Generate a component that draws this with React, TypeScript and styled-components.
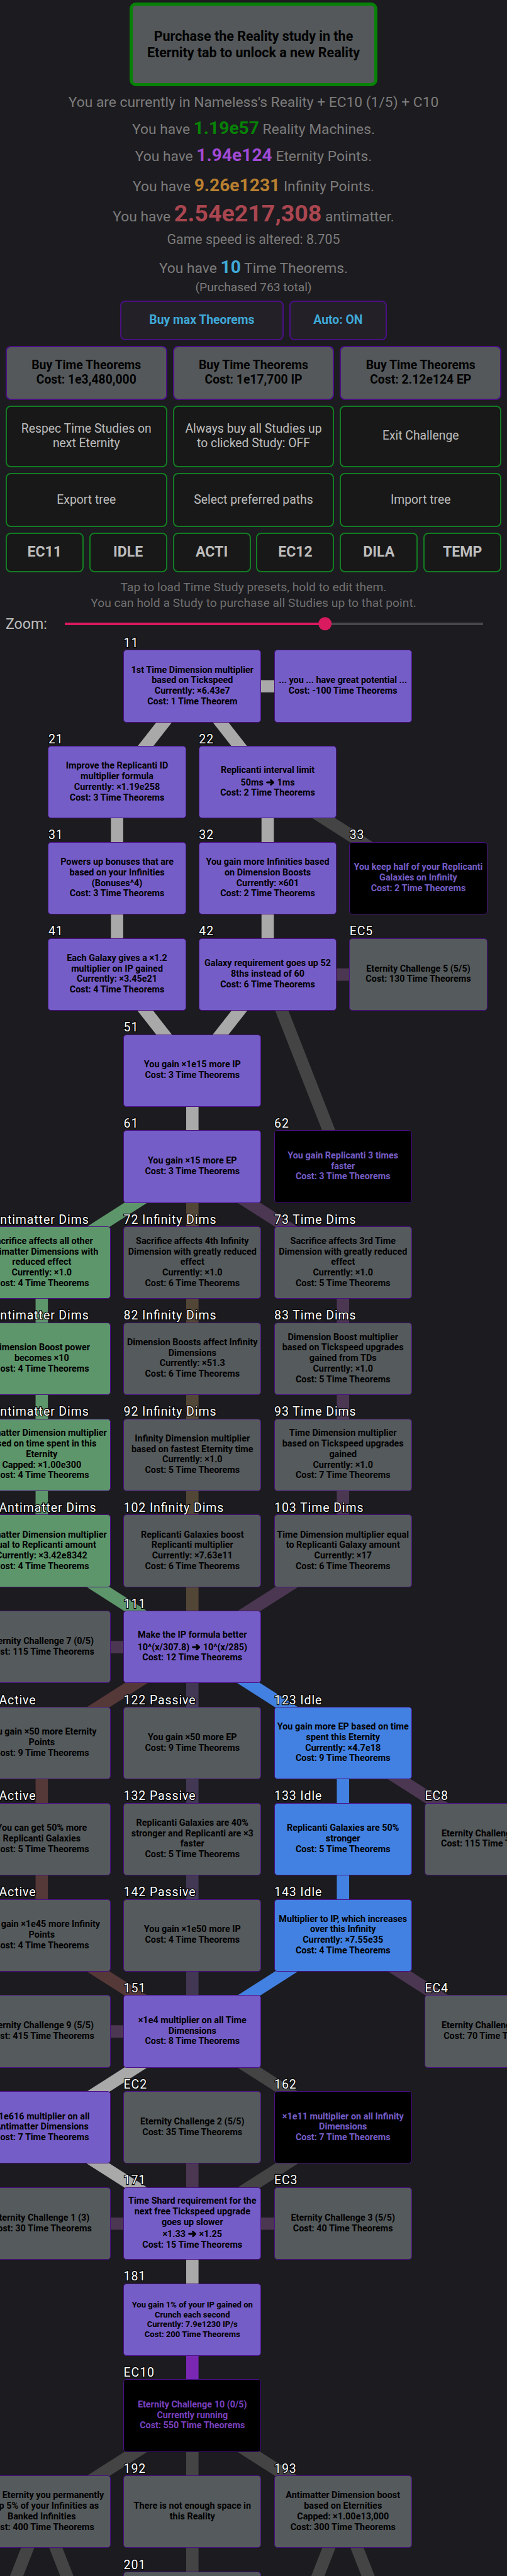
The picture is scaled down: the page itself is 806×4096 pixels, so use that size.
import React from "react";
import styled, { createGlobalStyle } from "styled-components";

const GlobalStyle = createGlobalStyle`
  html, body { margin: 0; padding: 0; background: #1c1b1f; }
  body { font-family: Roboto, "Liberation Sans", sans-serif; }
  *, *::before, *::after { box-sizing: border-box; }
`;

const Screen = styled.main`
  display: flex;
  flex-direction: column;
  width: 806px;
  height: 4096px;
  overflow: hidden;
  background: #1c1b1f;
`;

const RealityButton = styled.button`
  align-self: center;
  flex: none;
  width: 394px;
  height: 133px;
  margin: 4.2px 0 4.8px;
  padding: 0;
  border: 5.2px solid #078207;
  border-radius: 10px;
  background: #54585a;
  color: #000;
  font: 700 21.47px/25.2px Roboto, sans-serif;
  white-space: nowrap;
`;

const StatLine = styled.p<{ $h: number; $size?: number; $top?: number }>`
  flex: none;
  margin: ${(p) => p.$top ?? 0}px 0 0;
  height: ${(p) => p.$h}px;
  line-height: ${(p) => p.$h}px;
  font-size: ${(p) => p.$size ?? 22.8}px;
  text-align: center;
  white-space: nowrap;
  color: #7c7c7c;
`;

const Amount = styled.b<{ $color: string; $size?: number }>`
  font-size: ${(p) => p.$size ?? 28.2}px;
  line-height: 0;
  color: ${(p) => p.$color};
`;

const ButtonRow = styled.div<{ $h: number; $top?: number }>`
  display: flex;
  flex: none;
  justify-content: center;
  gap: 8.8px;
  height: ${(p) => p.$h}px;
  margin-top: ${(p) => p.$top ?? 9}px;
  padding: 0 8.8px;
`;

const GameButton = styled.button<{ $kind: "theorem" | "locked" | "plain" | "preset"; $w?: number }>`
  flex: ${(p) => (p.$w ? `0 0 ${p.$w}px` : "1 1 0")};
  min-width: 0;
  padding: 0;
  border: 2px solid ${(p) => (p.$kind === "theorem" || p.$kind === "locked" ? "#4a1085" : "#127d22")};
  border-radius: 8px;
  background: ${(p) => (p.$kind === "theorem" ? "#242027" : p.$kind === "locked" ? "#54585a" : "#181818")};
  color: ${(p) => (p.$kind === "theorem" ? "#3fa9d8" : p.$kind === "locked" ? "#000" : "#bdbdbd")};
  font-family: Roboto, sans-serif;
  font-weight: ${(p) => (p.$kind === "plain" ? 400 : 700)};
  font-size: ${(p) => (p.$kind === "preset" ? 23.1 : 19.35)}px;
  line-height: 22.7px;
  white-space: nowrap;
`;

const Hint = styled.p`
  flex: none;
  margin: 10.7px 0 0;
  height: 51px;
  font-size: 19.25px;
  line-height: 25.5px;
  text-align: center;
  color: #707070;
`;

const ZoomRow = styled.div`
  display: flex;
  flex: none;
  align-items: center;
  height: 40px;
  padding: 0 38px 0 9px;
  color: #bdbdbd;
  font-size: 23.1px;
`;

const ZoomLabel = styled.span`
  width: 94.3px;
  padding-top: 1.5px;
`;

const Track = styled.div`
  position: relative;
  flex: 1;
  height: 3.6px;
  background: #48474b;
`;

const TrackFill = styled.div`
  width: 62.2%;
  height: 100%;
  background: #da1a5f;
`;

const Thumb = styled.div`
  position: absolute;
  left: 62.2%;
  top: 50%;
  width: 21.6px;
  height: 21.6px;
  border-radius: 50%;
  background: #da1a5f;
  transform: translate(-50%, -50%);
`;

const Tree = styled.section`
  position: relative;
  flex: 1;
  overflow: hidden;
`;

const Links = styled.svg`
  position: absolute;
  inset: 0;
  width: 806px;
  height: 3084px;
`;

const COL0 = 305.8;
const COL = 239.45;
const ROW0 = 79.25;
const ROW = 152.78;
const cx = (c: number) => COL0 + c * COL;
const cy = (r: number) => ROW0 + r * ROW;

type Kind = "bought" | "gray" | "open" | "running" | "antimatter" | "idle";

const FILL: Record<Kind, string> = {
  bought: "#755dc7",
  gray: "#555a5c",
  open: "#000000",
  running: "#000000",
  antimatter: "#5e966b",
  idle: "#4281e1",
};

const INK: Record<Kind, string> = {
  bought: "#000",
  gray: "#000",
  open: "#755dc7",
  running: "#7840bf",
  antimatter: "#000",
  idle: "#000",
};

const Study = styled.div<{ $c: number; $r: number; $kind: Kind; $small?: boolean }>`
  position: absolute;
  left: ${(p) => cx(p.$c) - 109.6}px;
  top: ${(p) => cy(p.$r) - 57.6}px;
  width: 219.2px;
  height: 115.2px;
  display: flex;
  flex-direction: column;
  align-items: center;
  justify-content: center;
  border: 1.4px solid #4a1085;
  border-radius: 5px;
  background: ${(p) => FILL[p.$kind]};
  color: ${(p) => INK[p.$kind]};
  font-weight: 700;
  font-size: ${(p) => (p.$small ? 13.08 : 14.4)}px;
  line-height: ${(p) => (p.$small ? 15.4 : 16.75)}px;
  white-space: nowrap;
`;

const StudyLine = styled.span<{ $arrow?: boolean }>`
  padding-top: ${(p) => (p.$arrow ? 2.5 : 0)}px;
`;

const Arrow = styled.svg`
  width: 13.2px;
  height: 10.2px;
  margin: 0 0.6px;
  vertical-align: -0.4px;
  fill: none;
  stroke: currentColor;
  stroke-width: 3;
  stroke-linecap: round;
  stroke-linejoin: round;
`;

const StudyLabel = styled.span<{ $c: number; $r: number }>`
  position: absolute;
  left: ${(p) => cx(p.$c) - 109.2}px;
  top: ${(p) => cy(p.$r) - 57.6 - 22.5}px;
  font-size: 19.5px;
  letter-spacing: 0.9px;
  font-feature-settings: "liga" 1;
  line-height: 24px;
  color: #fff;
  white-space: nowrap;
  -webkit-text-stroke: 2.4px #000;
  paint-order: stroke fill;
`;

interface StudyData {
  c: number;
  r: number;
  kind: Kind;
  label?: string;
  text: string;
  small?: boolean;
}

const studies: StudyData[] = [
  { c: 0, r: 0, kind: "bought", label: "11", text: "1st Time Dimension multiplier|based on Tickspeed|Currently: ×6.43e7|Cost: 1 Time Theorem" },
  { c: 1, r: 0, kind: "bought", text: "... you ... have great potential ...|Cost: -100 Time Theorems" },
  { c: -0.5, r: 1, kind: "bought", label: "21", text: "Improve the Replicanti ID|multiplier formula|Currently: ×1.19e258|Cost: 3 Time Theorems" },
  { c: 0.5, r: 1, kind: "bought", label: "22", text: "Replicanti interval limit|50ms ➜ 1ms|Cost: 2 Time Theorems" },
  { c: -0.5, r: 2, kind: "bought", label: "31", text: "Powers up bonuses that are|based on your Infinities|(Bonuses^4)|Cost: 3 Time Theorems" },
  { c: 0.5, r: 2, kind: "bought", label: "32", text: "You gain more Infinities based|on Dimension Boosts|Currently: ×601|Cost: 2 Time Theorems" },
  { c: 1.5, r: 2, kind: "open", label: "33", text: "You keep half of your Replicanti|Galaxies on Infinity|Cost: 2 Time Theorems" },
  { c: -0.5, r: 3, kind: "bought", label: "41", text: "Each Galaxy gives a ×1.2|multiplier on IP gained|Currently: ×3.45e21|Cost: 4 Time Theorems" },
  { c: 0.5, r: 3, kind: "bought", label: "42", text: "Galaxy requirement goes up 52|8ths instead of 60|Cost: 6 Time Theorems" },
  { c: 1.5, r: 3, kind: "gray", label: "EC5", text: "Eternity Challenge 5 (5/5)|Cost: 130 Time Theorems" },
  { c: 0, r: 4, kind: "bought", label: "51", text: "You gain ×1e15 more IP|Cost: 3 Time Theorems" },
  { c: 0, r: 5, kind: "bought", label: "61", text: "You gain ×15 more EP|Cost: 3 Time Theorems" },
  { c: 1, r: 5, kind: "open", label: "62", text: "You gain Replicanti 3 times|faster|Cost: 3 Time Theorems" },
  { c: -1, r: 6, kind: "antimatter", label: "71 Antimatter Dims", text: "Sacrifice affects all other|Antimatter Dimensions with|reduced effect|Currently: ×1.0|Cost: 4 Time Theorems" },
  { c: 0, r: 6, kind: "gray", label: "72 Infinity Dims", text: "Sacrifice affects 4th Infinity|Dimension with greatly reduced|effect|Currently: ×1.0|Cost: 6 Time Theorems" },
  { c: 1, r: 6, kind: "gray", label: "73 Time Dims", text: "Sacrifice affects 3rd Time|Dimension with greatly reduced|effect|Currently: ×1.0|Cost: 5 Time Theorems" },
  { c: -1, r: 7, kind: "antimatter", label: "81 Antimatter Dims", text: "Dimension Boost power|becomes ×10|Cost: 4 Time Theorems" },
  { c: 0, r: 7, kind: "gray", label: "82 Infinity Dims", text: "Dimension Boosts affect Infinity|Dimensions|Currently: ×51.3|Cost: 6 Time Theorems" },
  { c: 1, r: 7, kind: "gray", label: "83 Time Dims", text: "Dimension Boost multiplier|based on Tickspeed upgrades|gained from TDs|Currently: ×1.0|Cost: 5 Time Theorems" },
  { c: -1, r: 8, kind: "antimatter", label: "91 Antimatter Dims", text: "Antimatter Dimension multiplier|based on time spent in this|Eternity|Capped: ×1.00e300|Cost: 4 Time Theorems" },
  { c: 0, r: 8, kind: "gray", label: "92 Infinity Dims", text: "Infinity Dimension multiplier|based on fastest Eternity time|Currently: ×1.0|Cost: 5 Time Theorems" },
  { c: 1, r: 8, kind: "gray", label: "93 Time Dims", text: "Time Dimension multiplier|based on Tickspeed upgrades|gained|Currently: ×1.0|Cost: 7 Time Theorems" },
  { c: -1, r: 9, kind: "antimatter", label: "101 Antimatter Dims", text: "Antimatter Dimension multiplier|equal to Replicanti amount|Currently: ×3.42e8342|Cost: 4 Time Theorems" },
  { c: 0, r: 9, kind: "gray", label: "102 Infinity Dims", text: "Replicanti Galaxies boost|Replicanti multiplier|Currently: ×7.63e11|Cost: 6 Time Theorems" },
  { c: 1, r: 9, kind: "gray", label: "103 Time Dims", text: "Time Dimension multiplier equal|to Replicanti Galaxy amount|Currently: ×17|Cost: 6 Time Theorems" },
  { c: -1, r: 10, kind: "gray", label: "EC7", text: "Eternity Challenge 7 (0/5)|Cost: 115 Time Theorems" },
  { c: 0, r: 10, kind: "bought", label: "111", text: "Make the IP formula better|10^(x/307.8) ➜ 10^(x/285)|Cost: 12 Time Theorems" },
  { c: -1, r: 11, kind: "gray", label: "121 Active", text: "You gain ×50 more Eternity|Points|Cost: 9 Time Theorems" },
  { c: 0, r: 11, kind: "gray", label: "122 Passive", text: "You gain ×50 more EP|Cost: 9 Time Theorems" },
  { c: 1, r: 11, kind: "idle", label: "123 Idle", text: "You gain more EP based on time|spent this Eternity|Currently: ×4.7e18|Cost: 9 Time Theorems" },
  { c: -1, r: 12, kind: "gray", label: "131 Active", text: "You can get 50% more|Replicanti Galaxies|Cost: 5 Time Theorems" },
  { c: 0, r: 12, kind: "gray", label: "132 Passive", text: "Replicanti Galaxies are 40%|stronger and Replicanti are ×3|faster|Cost: 5 Time Theorems" },
  { c: 1, r: 12, kind: "idle", label: "133 Idle", text: "Replicanti Galaxies are 50%|stronger|Cost: 5 Time Theorems" },
  { c: 2, r: 12, kind: "gray", label: "EC8", text: "Eternity Challenge 8 (5/5)|Cost: 115 Time Theorems" },
  { c: -1, r: 13, kind: "gray", label: "141 Active", text: "You gain ×1e45 more Infinity|Points|Cost: 4 Time Theorems" },
  { c: 0, r: 13, kind: "gray", label: "142 Passive", text: "You gain ×1e50 more IP|Cost: 4 Time Theorems" },
  { c: 1, r: 13, kind: "idle", label: "143 Idle", text: "Multiplier to IP, which increases|over this Infinity|Currently: ×7.55e35|Cost: 4 Time Theorems" },
  { c: -1, r: 14, kind: "gray", label: "EC9", text: "Eternity Challenge 9 (5/5)|Cost: 415 Time Theorems" },
  { c: 0, r: 14, kind: "bought", label: "151", text: "×1e4 multiplier on all Time|Dimensions|Cost: 8 Time Theorems" },
  { c: 2, r: 14, kind: "gray", label: "EC4", text: "Eternity Challenge 4 (5/5)|Cost: 70 Time Theorems" },
  { c: -1, r: 15, kind: "bought", label: "161", text: "×1e616 multiplier on all|Antimatter Dimensions|Cost: 7 Time Theorems" },
  { c: 0, r: 15, kind: "gray", label: "EC2", text: "Eternity Challenge 2 (5/5)|Cost: 35 Time Theorems" },
  { c: 1, r: 15, kind: "open", label: "162", text: "×1e11 multiplier on all Infinity|Dimensions|Cost: 7 Time Theorems" },
  { c: -1, r: 16, kind: "gray", label: "EC1", text: "Eternity Challenge 1 (3)|Cost: 30 Time Theorems" },
  { c: 0, r: 16, kind: "bought", label: "171", text: "Time Shard requirement for the|next free Tickspeed upgrade|goes up slower|×1.33 ➜ ×1.25|Cost: 15 Time Theorems" },
  { c: 1, r: 16, kind: "gray", label: "EC3", text: "Eternity Challenge 3 (5/5)|Cost: 40 Time Theorems" },
  { c: 0, r: 17, kind: "bought", label: "181", small: true, text: "You gain 1% of your IP gained on|Crunch each second|Currently: 7.9e1230 IP/s|Cost: 200 Time Theorems" },
  { c: 0, r: 18, kind: "running", label: "EC10", text: "Eternity Challenge 10 (0/5)|Currently running|Cost: 550 Time Theorems" },
  { c: -1, r: 19, kind: "gray", label: "191", text: "After Eternity you permanently|keep 5% of your Infinities as|Banked Infinities|Cost: 400 Time Theorems" },
  { c: 0, r: 19, kind: "gray", label: "192", text: "There is not enough space in|this Reality" },
  { c: 1, r: 19, kind: "gray", label: "193", text: "Antimatter Dimension boost|based on Eternities|Capped: ×1.00e13,000|Cost: 300 Time Theorems" },
  { c: 0, r: 20, kind: "gray", label: "201", text: "" },
];

const LIGHT = "#a9a9a9";
const DARK = "#444444";
const GREEN = "#5e966b";
const BROWN = "#524637";
const PLUM = "#4b3752";
const RED = "#553838";
const SLATE = "#423854";
const BLUE = "#4281e1";

// [from column, from row, to column, to row, colour]
const links: [number, number, number, number, string][] = [
  [0, 0, 1, 0, LIGHT],
  [0, 0, -0.5, 1, LIGHT],
  [0, 0, 0.5, 1, LIGHT],
  [-0.5, 1, -0.5, 3, LIGHT],
  [0.5, 1, 1.5, 2, DARK],
  [0.5, 1, 0.5, 3, LIGHT],
  [0.5, 3, 1.5, 3, PLUM],
  [-0.5, 3, 0, 4, LIGHT],
  [0.5, 3, 0, 4, LIGHT],
  [0.5, 3, 1, 5, DARK],
  [0, 4, 0, 5, LIGHT],
  [0, 5, -1, 6, GREEN],
  [0, 5, 1, 6, PLUM],
  [-1, 6, -1, 9, GREEN],
  [0, 5, 0, 10, BROWN],
  [1, 6, 1, 9, PLUM],
  [-1, 9, 0, 10, GREEN],
  [1, 9, 0, 10, PLUM],
  [-1, 10, 0, 10, PLUM],
  [0, 10, -1, 11, RED],
  [-1, 11, -1, 13, RED],
  [-1, 13, 0, 14, RED],
  [0, 10, 0, 14, SLATE],
  [1, 11, 2, 12, PLUM],
  [1, 13, 2, 14, PLUM],
  [0, 10, 1, 11, BLUE],
  [1, 11, 1, 13, BLUE],
  [1, 13, 0, 14, BLUE],
  [-1, 14, 0, 14, PLUM],
  [0, 14, -1, 15, LIGHT],
  [0, 14, 1, 15, DARK],
  [-1, 15, 0, 16, LIGHT],
  [0, 15, 0, 16, PLUM],
  [1, 15, 0, 16, DARK],
  [-1, 16, 1, 16, PLUM],
  [0, 16, 0, 17, LIGHT],
  [0, 17, 0, 18, "#7a28b4"],
  [0, 18, -1, 19, DARK],
  [0, 18, 0, 20, DARK],
  [0, 18, 1, 19, DARK],
  [-1, 19, -1.5, 21, DARK],
  [-1, 19, -0.5, 21, DARK],
  [1, 19, 0.5, 21, DARK],
  [1, 19, 1.5, 21, DARK],
];

function StudyText({ line }: { line: string }) {
  const [before, after] = line.split("➜");
  if (after === undefined) return <StudyLine>{line}</StudyLine>;
  return (
    <StudyLine $arrow>
      {before}
      <Arrow viewBox="0 0 13.2 10.2">
        <path d="M1.6 5.1H11M7.7 1.6L11.6 5.1L7.7 8.6M9 4L10.5 5.1L9 6.2" />
      </Arrow>
      {after}
    </StudyLine>
  );
}

export default function App() {
  return (
    <>
      <GlobalStyle />
      <Screen>
        <RealityButton>
          Purchase the Reality study in the
          <br />
          Eternity tab to unlock a new Reality
        </RealityButton>
        <StatLine $h={42.6}>You are currently in Nameless's Reality + EC10 (1/5) + C10</StatLine>
        <StatLine $h={42.8}>
          You have <Amount $color="#078207">1.19e57</Amount> Reality Machines.
        </StatLine>
        <StatLine $h={44.8}>
          You have <Amount $color="#a04ad6">1.94e124</Amount> Eternity Points.
        </StatLine>
        <StatLine $h={50.2}>
          You have <Amount $color="#b98030">9.26e1231</Amount> Infinity Points.
        </StatLine>
        <StatLine $h={45.2}>
          You have <Amount $color="#aa4650" $size={37.6}>2.54e217,308</Amount> antimatter.
        </StatLine>
        <StatLine $h={26.6} $size={21.3}>Game speed is altered: 8.705</StatLine>
        <StatLine $h={40} $top={13.1}>
          You have <Amount $color="#3fa9d8">10</Amount> Time Theorems.
        </StatLine>
        <StatLine $h={19.6} $size={19.25}>(Purchased 763 total)</StatLine>

        <ButtonRow $h={63} $top={10.7}>
          <GameButton $kind="theorem" $w={260}>Buy max Theorems</GameButton>
          <GameButton $kind="theorem" $w={155.4}>Auto: ON</GameButton>
        </ButtonRow>
        <ButtonRow $h={86.4}>
          <GameButton $kind="locked">Buy Time Theorems<br />Cost: 1e3,480,000</GameButton>
          <GameButton $kind="locked">Buy Time Theorems<br />Cost: 1e17,700 IP</GameButton>
          <GameButton $kind="locked">Buy Time Theorems<br />Cost: 2.12e124 EP</GameButton>
        </ButtonRow>
        <ButtonRow $h={97.8}>
          <GameButton $kind="plain">Respec Time Studies on<br />next Eternity</GameButton>
          <GameButton $kind="plain">Always buy all Studies up<br />to clicked Study: OFF</GameButton>
          <GameButton $kind="plain">Exit Challenge</GameButton>
        </ButtonRow>
        <ButtonRow $h={86.4}>
          <GameButton $kind="plain">Export tree</GameButton>
          <GameButton $kind="plain">Select preferred paths</GameButton>
          <GameButton $kind="plain">Import tree</GameButton>
        </ButtonRow>
        <ButtonRow $h={63}>
          {["EC11", "IDLE", "ACTI", "EC12", "DILA", "TEMP"].map((name) => (
            <GameButton key={name} $kind="preset">{name}</GameButton>
          ))}
        </ButtonRow>

        <Hint>
          Tap to load Time Study presets, hold to edit them.
          <br />
          You can hold a Study to purchase all Studies up to that point.
        </Hint>
        <ZoomRow>
          <ZoomLabel>Zoom:</ZoomLabel>
          <Track>
            <TrackFill />
            <Thumb />
          </Track>
        </ZoomRow>

        <Tree>
          <Links viewBox="0 0 806 3084">
            {links.map(([c1, r1, c2, r2, color], i) => (
              <line key={i} x1={cx(c1)} y1={cy(r1)} x2={cx(c2)} y2={cy(r2)} stroke={color} strokeWidth={19.6} />
            ))}
          </Links>
          {studies.map((s) => (
            <React.Fragment key={`${s.c}/${s.r}`}>
              {s.label && <StudyLabel $c={s.c} $r={s.r}>{s.label}</StudyLabel>}
              <Study $c={s.c} $r={s.r} $kind={s.kind} $small={s.small}>
                {s.text.split("|").map((line, i) => (
                  <StudyText key={i} line={line} />
                ))}
              </Study>
            </React.Fragment>
          ))}
        </Tree>
      </Screen>
    </>
  );
}
